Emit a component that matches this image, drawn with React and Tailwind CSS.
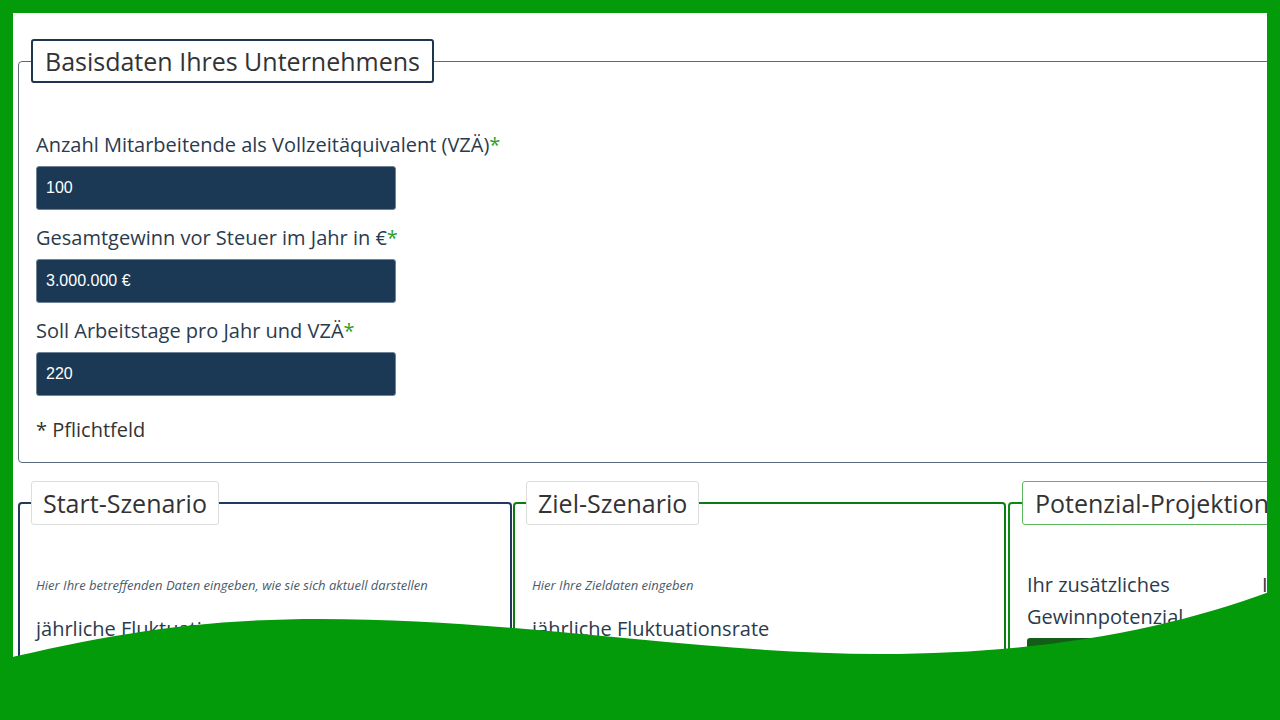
import React from 'react';

const font = { fontFamily: '"Open Sans", "Noto Sans", sans-serif' };

function Field({ label, value }) {
  return (
    <div className="mb-[14px]">
      <div className="mb-2 text-[20px] leading-[27px] text-[#2b3b4e]">
        {label}
        <span className="text-[#2ca02c]">*</span>
      </div>
      <div
        className="flex h-[44px] w-[360px] items-center rounded-[3px] border border-[#6f8296] bg-[#1b3955] px-[9px] text-[16px] text-white"
        style={{ fontFamily: '"Liberation Sans", Arial, sans-serif' }}
      >
        {value}
      </div>
    </div>
  );
}

export default function App() {
  return (
    <div className="relative h-[720px] w-[1280px] overflow-hidden bg-[#049b0b] px-[13px] pt-[13px]" style={font}>
      <div className="h-full overflow-hidden bg-white pl-[5px] pt-[26px]">
        <div className="w-[1500px]">
          {/* Basisdaten */}
          <fieldset className="rounded-[4px] border border-[#5b6b7d] px-0 pb-[19px]">
            <legend className="ml-[12px] rounded-[3px] border-2 border-[#1e3550] bg-white px-[12px] text-[25px] leading-[40px] text-[#333]">
              Basisdaten Ihres Unternehmens
            </legend>
            <div className="pl-[17px] pt-[48px]">
              <Field label="Anzahl Mitarbeitende als Vollzeitäquivalent (VZÄ)" value="100" />
              <Field label="Gesamtgewinn vor Steuer im Jahr in €" value="3.000.000 €" />
              <Field label="Soll Arbeitstage pro Jahr und VZÄ" value="220" />
              <div className="mt-[20px] text-[20px] leading-[27px] text-[#333]">* Pflichtfeld</div>
            </div>
          </fieldset>

          {/* Szenarien */}
          <div className="mt-[18px] flex gap-[1px]">
            <fieldset className="w-[494px] rounded-[4px] border-2 border-[#1e3a5f] px-0 pb-10">
              <legend className="ml-[11px] rounded-[3px] border border-[#dddddd] bg-white px-[11px] text-[25px] leading-[42px] text-[#333]">
                Start-Szenario
              </legend>
              <div className="pl-[16px] pt-[51px]">
                <div className="text-[13px] italic leading-[18px] text-[#4a5a6a]">
                  Hier Ihre betreffenden Daten eingeben, wie sie sich aktuell darstellen
                </div>
                <div className="mt-[21px] text-[20px] leading-[28px] text-[#2b3b4e]">jährliche Fluktuationsrate</div>
              </div>
            </fieldset>

            <fieldset className="w-[493px] rounded-[4px] border-2 border-[#0d7a12] px-0 pb-10">
              <legend className="ml-[11px] rounded-[3px] border border-[#dddddd] bg-white px-[11px] text-[25px] leading-[42px] text-[#333]">
                Ziel-Szenario
              </legend>
              <div className="pl-[17px] pt-[51px]">
                <div className="text-[13px] italic leading-[18px] text-[#4a5a6a]">Hier Ihre Zieldaten eingeben</div>
                <div className="mt-[21px] text-[20px] leading-[28px] text-[#2b3b4e]">jährliche Fluktuationsrate</div>
              </div>
            </fieldset>

            <fieldset className="ml-[1px] w-[494px] rounded-[4px] border-2 border-[#0d8a12] px-0 pb-10">
              <legend className="ml-[12px] rounded-[3px] border border-[#5cb85c] bg-white px-[12px] text-[25px] leading-[42px] text-[#333]">
                Potenzial-Projektion
              </legend>
              <div className="grid grid-cols-[235px_200px] pl-[17px] pt-[44px]">
                <div>
                  <div className="w-[200px] text-[20px] leading-[32px] text-[#2b3b4e]">Ihr zusätzliches Gewinnpotenzial</div>
                  <div className="mt-[5px] h-[40px] w-[200px] rounded-[3px] bg-[#135e17]" />
                </div>
                <div className="text-[20px] leading-[32px] text-[#2b3b4e]">Ihr</div>
              </div>
            </fieldset>
          </div>
        </div>
      </div>

      {/* green wave overlay */}
      <svg className="absolute inset-0" width="1280" height="720" viewBox="0 0 1280 720">
        <path
          d="M0,660 C110,634 200,619 320,619 C520,619 700,654 880,654 C1040,654 1170,630 1280,588 L1280,720 L0,720 Z"
          fill="#049b0b"
        />
      </svg>
    </div>
  );
}
